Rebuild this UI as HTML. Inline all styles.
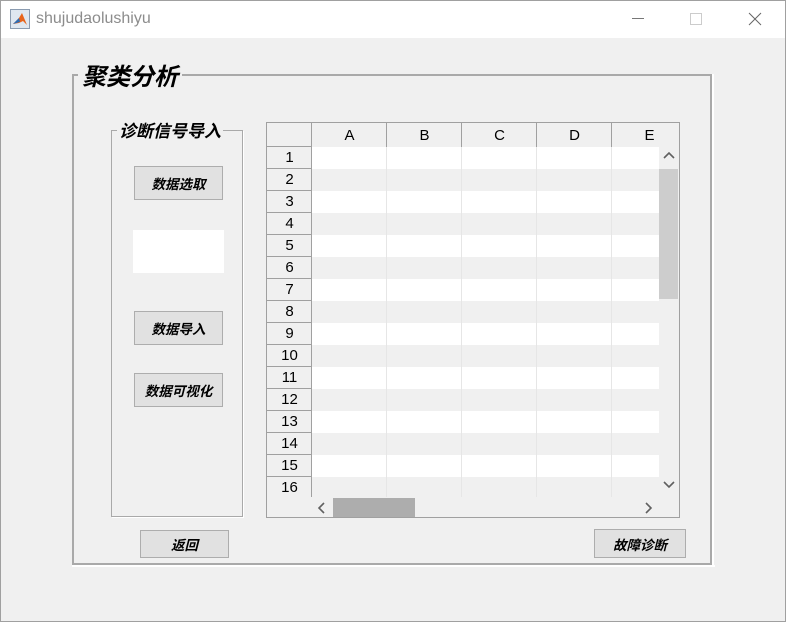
<!DOCTYPE html>
<html><head><meta charset="utf-8"><style>
*{margin:0;padding:0;box-sizing:border-box}
body{width:786px;height:622px;background:#f0f0f0;position:relative;overflow:hidden;font-family:"Liberation Sans","Noto Sans CJK SC",sans-serif}
.a{position:absolute}
.cj{font-family:"Liberation Sans","Noto Sans CJK SC",sans-serif;font-style:italic;font-weight:bold;color:#000}
.btn{position:absolute;background:#e1e1e1;border:1px solid #adadad;font-size:13.5px;display:flex;align-items:center;justify-content:center}
.rh{position:absolute;left:0;width:45px;height:22px;border-top:1px solid #a0a0a0;font-size:15px;text-align:center;line-height:22px;color:#000}
.ch{position:absolute;top:0;height:24px;border-left:1px solid #a0a0a0;font-size:15px;text-align:center;line-height:25px}
.vl{position:absolute;top:24px;width:1px;height:350px;background:#e6e6e6}
</style></head><body>
<div class="a" style="left:0;top:0;width:786px;height:38px;background:#fff;border:1px solid #a0a0a0;border-bottom:none"></div>
<div class="a" style="left:0;top:0;width:1px;height:622px;background:#a0a0a0"></div>
<div class="a" style="right:0;top:0;width:1px;height:622px;background:#a0a0a0"></div>
<div class="a" style="left:0;bottom:0;width:786px;height:1px;background:#a0a0a0"></div>
<svg class="a" style="left:10px;top:9px" width="20" height="20" viewBox="0 0 20 20"><rect x="0.5" y="0.5" width="19" height="19" fill="#dfe7f0" stroke="#8a9bb0"/><path d="M3 15 L9 9 L12 4 L17 16 L13 12 L9 14Z" fill="#e8641b"/><path d="M3 15 L9 9 L10 13Z" fill="#2b6cb5"/></svg>
<div class="a" style="left:36px;top:10px;font-size:16px;color:#8c8c8c">shujudaolushiyu</div>
<div class="a" style="left:632px;top:18px;width:12px;height:1px;background:#777"></div>
<div class="a" style="left:690px;top:13px;width:12px;height:12px;border:1px solid #ccc"></div>
<svg class="a" style="left:748px;top:12px" width="14" height="14"><path d="M1 1L13 13M13 1L1 13" stroke="#666" stroke-width="1"/></svg>

<!-- outer panel -->
<div class="a" style="left:72px;top:74px;width:642px;height:493px;border:2px solid #a9a9a9"></div>
<div class="a" style="left:712px;top:74px;width:2px;height:493px;background:#fff"></div>
<div class="a" style="left:72px;top:565px;width:643px;height:2px;background:#fff"></div>
<div class="a" style="left:72px;top:563px;width:640px;height:2px;background:#a9a9a9"></div>
<div class="a" style="left:710px;top:74px;width:2px;height:491px;background:#a9a9a9"></div>
<div class="a cj" style="left:78px;top:61px;font-size:24px;background:#f0f0f0;padding:0 4px;line-height:34px">聚类分析</div>

<!-- inner panel -->
<div class="a" style="left:111px;top:130px;width:132px;height:387px;border:1px solid #a9a9a9"></div>
<div class="a" style="left:112px;top:131px;width:132px;height:387px;border-right:1px solid #fff;border-bottom:1px solid #fff"></div>
<div class="a cj" style="left:117px;top:120px;font-size:17px;background:#f0f0f0;padding:0 2px;line-height:24px">诊断信号导入</div>

<div class="btn cj" style="left:134px;top:166px;width:89px;height:34px">数据选取</div>
<div class="a" style="left:133px;top:230px;width:91px;height:43px;background:#fff"></div>
<div class="btn cj" style="left:134px;top:311px;width:89px;height:34px">数据导入</div>
<div class="btn cj" style="left:134px;top:373px;width:89px;height:34px">数据可视化</div>
<div class="btn cj" style="left:140px;top:530px;width:89px;height:28px">返回</div>
<div class="btn cj" style="left:594px;top:529px;width:92px;height:29px">故障诊断</div>

<!-- table -->
<div class="a" style="left:266px;top:122px;width:414px;height:396px;border:1px solid #a0a0a0;background:#f0f0f0;overflow:hidden">
 <div class="a" style="left:45px;top:24px;width:347px;height:350px;background:repeating-linear-gradient(#fff 0 22px,#f0f0f0 22px 44px)"></div>
 <div class="vl" style="left:119px"></div><div class="vl" style="left:194px"></div><div class="vl" style="left:269px"></div><div class="vl" style="left:344px"></div>
 <div class="ch" style="left:44px;width:76px">A</div>
 <div class="ch" style="left:119px;width:76px">B</div>
 <div class="ch" style="left:194px;width:76px">C</div>
 <div class="ch" style="left:269px;width:76px">D</div>
 <div class="ch" style="left:344px;width:76px">E</div>
 <div class="a" style="left:0;top:0;width:45px;height:374px;border-right:1px solid #a0a0a0"></div>
 <div class="rh" style="top:23px">1</div><div class="rh" style="top:45px">2</div><div class="rh" style="top:67px">3</div><div class="rh" style="top:89px">4</div>
 <div class="rh" style="top:111px">5</div><div class="rh" style="top:133px">6</div><div class="rh" style="top:155px">7</div><div class="rh" style="top:177px">8</div>
 <div class="rh" style="top:199px">9</div><div class="rh" style="top:221px">10</div><div class="rh" style="top:243px">11</div><div class="rh" style="top:265px">12</div>
 <div class="rh" style="top:287px">13</div><div class="rh" style="top:309px">14</div><div class="rh" style="top:331px">15</div><div class="rh" style="top:353px">16</div>
 <div class="a" style="left:392px;top:24px;width:20px;height:350px;background:#f0f0f0"></div>
 <div class="a" style="left:392px;top:46px;width:19px;height:130px;background:#cdcdcd"></div>
 <svg class="a" style="left:396px;top:28px" width="12" height="10"><path d="M1 7L6 2L11 7" stroke="#606060" stroke-width="1.6" fill="none"/></svg>
 <svg class="a" style="left:396px;top:356px" width="12" height="10"><path d="M1 3L6 8L11 3" stroke="#606060" stroke-width="1.6" fill="none"/></svg>
 <div class="a" style="left:45px;top:374px;width:347px;height:20px;background:#f0f0f0"></div>
 <div class="a" style="left:66px;top:375px;width:82px;height:19px;background:#adadad"></div>
 <svg class="a" style="left:50px;top:379px" width="10" height="12"><path d="M7 1L2 6L7 11" stroke="#606060" stroke-width="1.6" fill="none"/></svg>
 <svg class="a" style="left:376px;top:379px" width="10" height="12"><path d="M3 1L8 6L3 11" stroke="#606060" stroke-width="1.6" fill="none"/></svg>
</div>
</body></html>
